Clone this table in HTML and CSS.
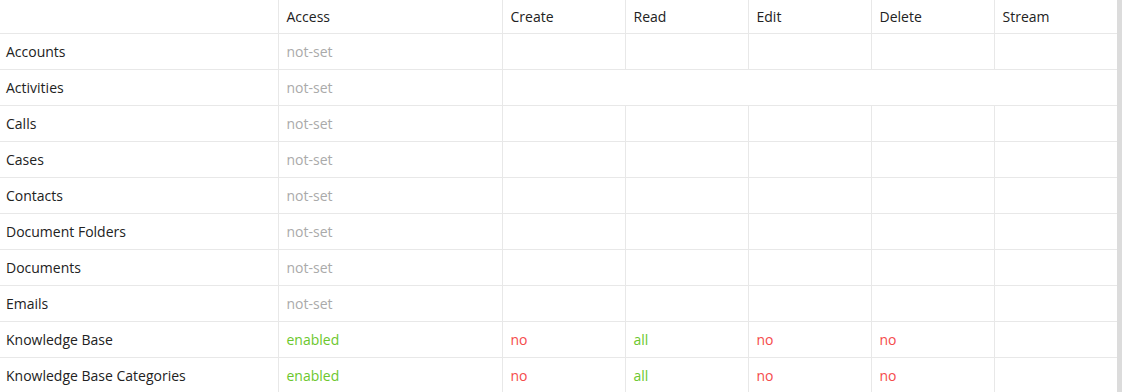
FILE: index.html
```html
<!DOCTYPE html>
<html>
<head>
<meta charset="utf-8">
<link rel="stylesheet" href="styles.css">
</head>
<body>
<div class="wrap">
<table class="acl">
  <colgroup>
    <col class="c-scope"><col class="c-access"><col class="c-act"><col class="c-act"><col class="c-act"><col class="c-act"><col class="c-act">
  </colgroup>
  <thead>
    <tr><th></th><th>Access</th><th>Create</th><th>Read</th><th>Edit</th><th>Delete</th><th>Stream</th></tr>
  </thead>
  <tbody>
    <tr><td>Accounts</td><td class="muted">not-set</td><td></td><td></td><td></td><td></td><td></td></tr>
    <tr><td>Activities</td><td class="muted">not-set</td><td colspan="5"></td></tr>
    <tr><td>Calls</td><td class="muted">not-set</td><td></td><td></td><td></td><td></td><td></td></tr>
    <tr><td>Cases</td><td class="muted">not-set</td><td></td><td></td><td></td><td></td><td></td></tr>
    <tr><td>Contacts</td><td class="muted">not-set</td><td></td><td></td><td></td><td></td><td></td></tr>
    <tr><td>Document Folders</td><td class="muted">not-set</td><td></td><td></td><td></td><td></td><td></td></tr>
    <tr><td>Documents</td><td class="muted">not-set</td><td></td><td></td><td></td><td></td><td></td></tr>
    <tr><td>Emails</td><td class="muted">not-set</td><td></td><td></td><td></td><td></td><td></td></tr>
    <tr><td>Knowledge Base</td><td class="ok">enabled</td><td class="bad">no</td><td class="ok">all</td><td class="bad">no</td><td class="bad">no</td><td></td></tr>
    <tr><td>Knowledge Base Categories</td><td class="ok">enabled</td><td class="bad">no</td><td class="ok">all</td><td class="bad">no</td><td class="bad">no</td><td></td></tr>
  </tbody>
</table>
</div>
</body>
</html>
```

FILE: styles.css
```css
html, body {
  margin: 0;
  padding: 0;
  background: #fff;
}
body {
  font-family: "Open Sans", "Liberation Sans", sans-serif;
  font-size: 14px;
  color: #333;
}
.wrap {
  width: 1117px;
  border-right: 5px solid #dcdcdc;
  overflow: hidden;
}
.acl {
  width: 1117px;
  border-collapse: collapse;
  table-layout: fixed;
}
.c-scope { width: 278px; }
.c-access { width: 224px; }
.c-act { width: 123px; }
.acl th, .acl td {
  border: 1px solid #e8e8e8;
  padding: 0 8px;
  text-align: left;
  white-space: nowrap;
}
.acl th {
  font-weight: 500;
  color: #222;
  height: 33px;
  border-top: none;
}
.acl td {
  height: 35px;
}
.acl tr > :first-child {
  border-left: none;
  padding-left: 6px;
}
.acl tbody tr > td:first-child {
  font-weight: 500;
  color: #222;
}
.acl tr > :last-child {
  border-right: none;
}
.acl tbody tr:last-child td {
  border-bottom: none;
}
.muted { color: #aaa; }
.ok { color: #6cc72d; }
.bad { color: #f54b4b; }
```
